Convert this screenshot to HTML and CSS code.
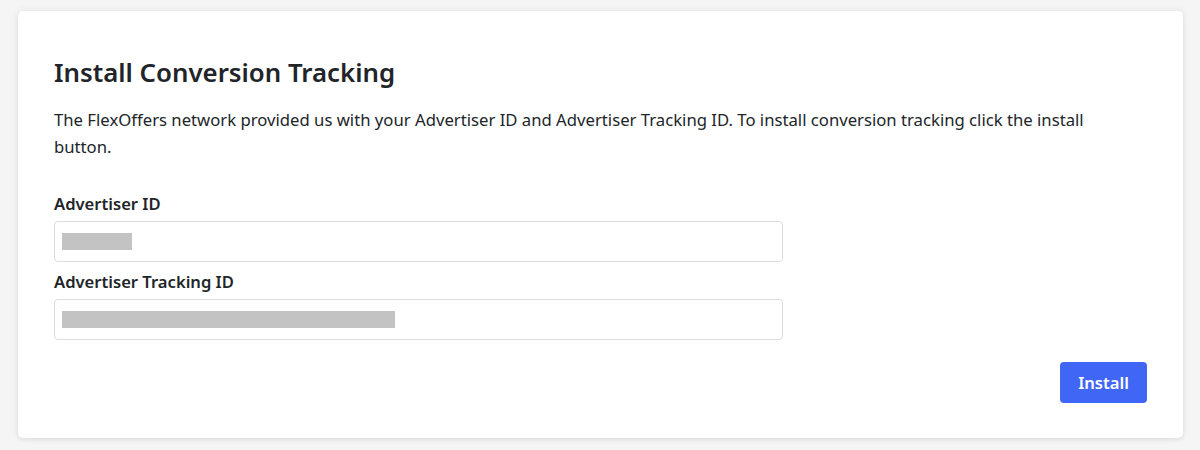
FILE: index.html
```html
<!DOCTYPE html>
<html lang="en">
<head>
<meta charset="utf-8">
<title>Install Conversion Tracking</title>
<link rel="stylesheet" href="styles.css">
</head>
<body>
<div class="page">
  <section class="card">
    <h1 class="title">Install Conversion Tracking</h1>
    <p class="desc">The FlexOffers network provided us with your Advertiser ID and Advertiser Tracking ID. To install conversion tracking click the install button.</p>
    <div class="fields">
      <label class="label">Advertiser ID</label>
      <div class="input"><span class="mask mask-short"></span></div>
      <label class="label">Advertiser Tracking ID</label>
      <div class="input"><span class="mask mask-long"></span></div>
    </div>
    <div class="actions">
      <button class="btn">Install</button>
    </div>
  </section>
</div>
</body>
</html>
```

FILE: styles.css
```css
* { box-sizing: border-box; }
html, body { margin: 0; padding: 0; }
body {
  background: #f5f5f5;
  font-family: "Noto Sans", "Open Sans", sans-serif;
  color: #212529;
  width: 1200px;
  height: 450px;
  overflow: hidden;
}
.page {
  padding: 11px 17px 0 18px;
}
.card {
  background: #fff;
  border-radius: 5px;
  box-shadow: 0 0 8px rgba(0,0,0,0.08), 0 2px 4px rgba(0,0,0,0.05);
  padding: 44px 36px 35px 36px;
  height: 427px;
  display: flex;
  flex-direction: column;
}
.title {
  margin: 0;
  font-size: 25.8px;
  font-weight: 600;
  line-height: 34px;
  color: #212529;
}
.desc {
  margin: 17px 0 0;
  font-size: 16.7px;
  line-height: 27px;
  max-width: 1060px;
}
.fields {
  margin-top: 32px;
  width: 729px;
  display: flex;
  flex-direction: column;
}
.label {
  font-size: 16.6px;
  font-weight: 600;
  line-height: 24px;
  margin-bottom: 5px;
}
.input {
  height: 41px;
  border: 1px solid #dcdce6;
  border-radius: 4px;
  padding: 11px 7px;
  margin-bottom: 8px;
  display: flex;
  align-items: flex-start;
}
.input:last-child { margin-bottom: 0; }
.mask {
  display: block;
  height: 17px;
  background: #c3c3c3;
}
.mask-short { width: 70px; }
.mask-long { width: 333px; }
.actions {
  margin-top: auto;
  display: flex;
  justify-content: flex-end;
}
.btn {
  width: 87px;
  height: 41px;
  background: #4066f6;
  color: #fff;
  border: 0;
  border-radius: 4px;
  font-family: inherit;
  font-size: 16.6px;
  font-weight: 600;
}
```
